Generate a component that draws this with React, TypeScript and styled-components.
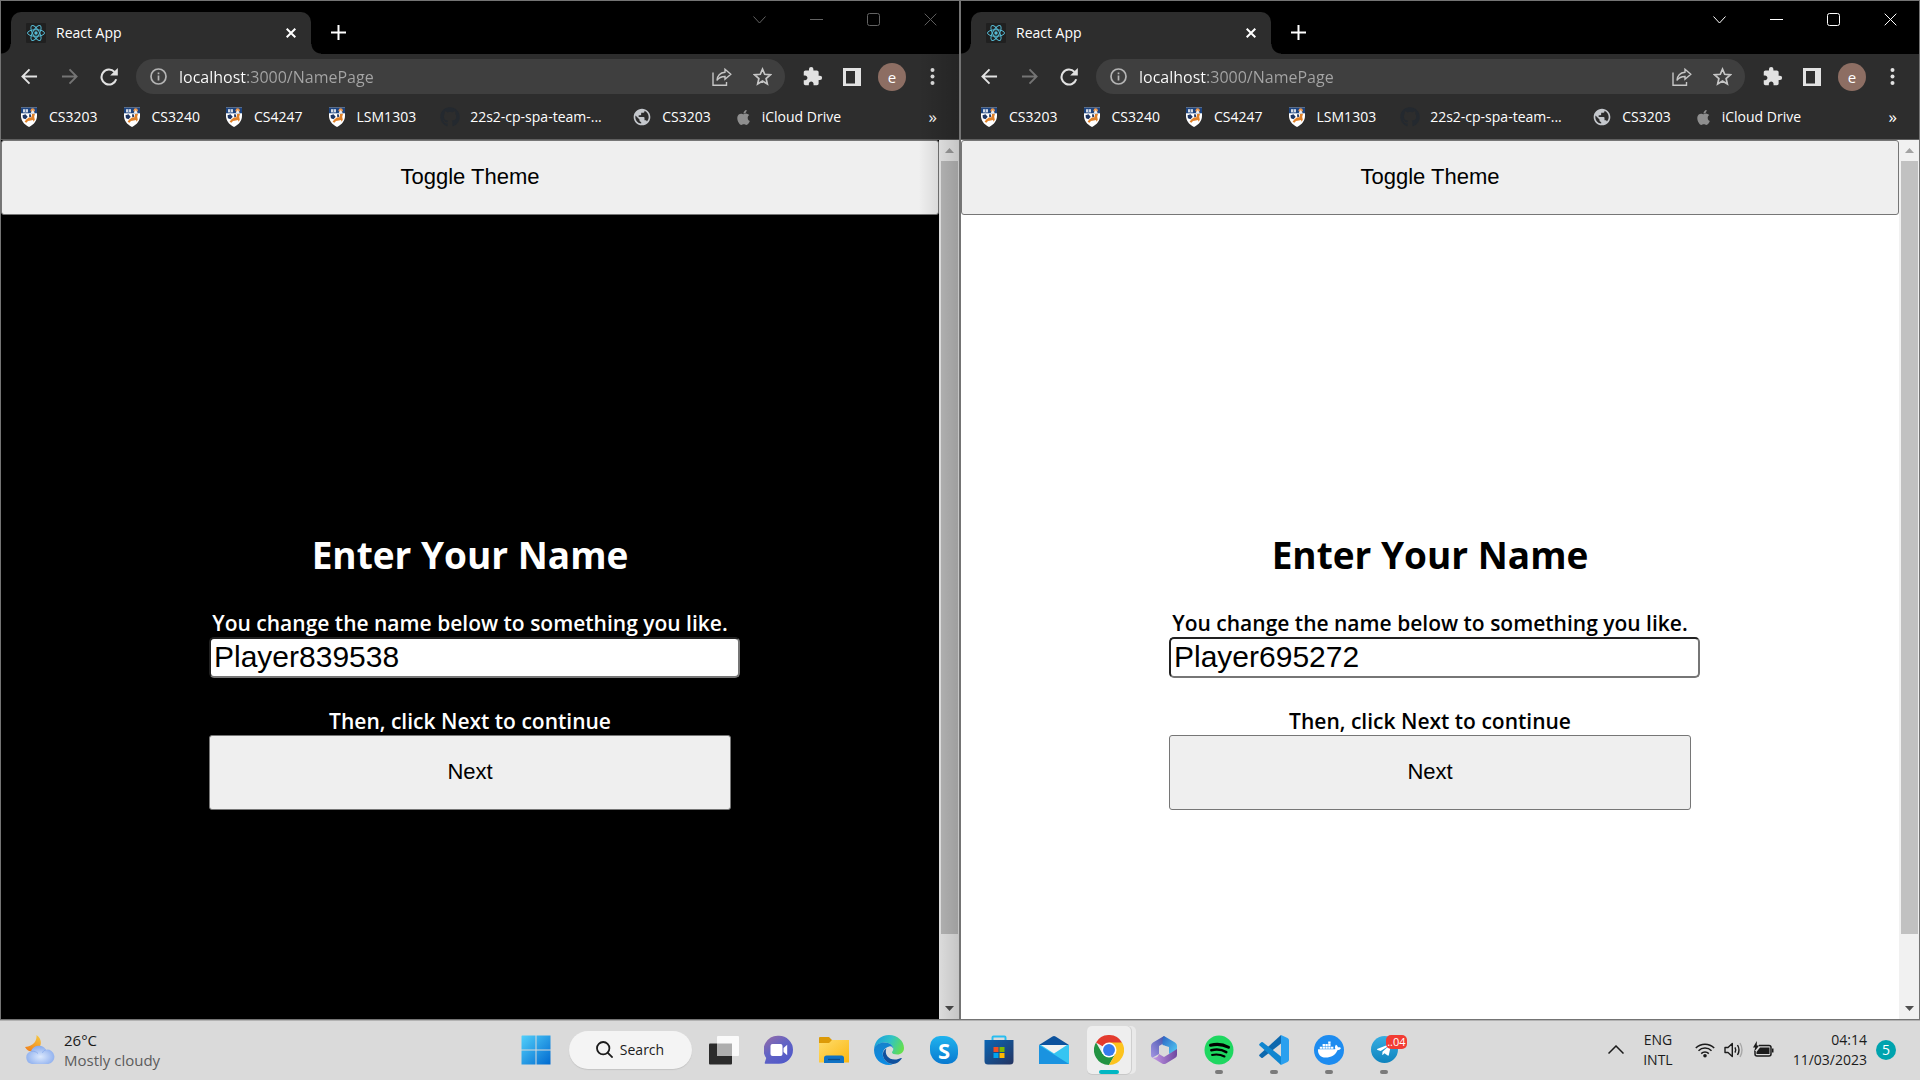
import React, { useId, useState } from "react";
import styled, { createGlobalStyle, css } from "styled-components";
import { FaApple, FaDocker, FaGithub, FaTelegramPlane } from "react-icons/fa";
import { MdExtension, MdPublic } from "react-icons/md";

const UI_FONT = `"Open Sans", "Noto Sans", sans-serif`;
const FORM_FONT = `"Liberation Sans", Arial, sans-serif`;

const GlobalStyle = createGlobalStyle`
  *, *::before, *::after { box-sizing: border-box; }
  body { margin: 0; background: #000; font-family: ${UI_FONT}; }
  button, input { font-family: inherit; margin: 0; }
  svg { display: block; flex: none; }
`;

const Desktop = styled.div`
  display: flex;
  flex-direction: column;
  min-height: 100vh;
`;

const Windows = styled.div`
  display: grid;
  grid-template-columns: 1fr 1fr;
  flex: 1;
`;

/* ---------- browser window ---------- */

const WindowFrame = styled.section<{ $active: boolean }>`
  position: relative;
  display: flex;
  flex-direction: column;
  min-width: 0;
  border: 1px solid #747474;
  background: #2d2d2d;

  ${(p) =>
    !p.$active &&
    css`
      &::after {
        content: "";
        position: absolute;
        inset: 0 0 0 auto;
        width: 40px;
        background: linear-gradient(90deg, transparent, rgba(0, 0, 0, 0.18));
        pointer-events: none;
      }
    `}
`;

const PlainButton = styled.button`
  display: flex;
  align-items: center;
  justify-content: center;
  padding: 0;
  border: 0;
  background: none;
  color: inherit;
`;

const TitleBar = styled.header`
  display: flex;
  height: 53px;
  padding-left: 10px;
  background: #000;
`;

const Tab = styled.div`
  position: relative;
  display: flex;
  align-items: center;
  gap: 10px;
  width: 300px;
  margin-top: 11px;
  padding: 0 12px 0 15px;
  border-radius: 10px 10px 0 0;
  background: #2d2d2d;
  color: #fff;
  font-size: 14px;

  &::before,
  &::after {
    content: "";
    position: absolute;
    bottom: 0;
    width: 10px;
    height: 10px;
  }
  &::before {
    right: 100%;
    background: radial-gradient(circle at 0 0, #000 9px, #2d2d2d 10px);
  }
  &::after {
    left: 100%;
    background: radial-gradient(circle at 100% 0, #000 9px, #2d2d2d 10px);
  }
`;

const TabTitle = styled.span`
  flex: 1;
  line-height: 20px;
`;

const TabButton = styled(PlainButton)`
  width: 16px;
  height: 20px;
  color: #fff;
`;

const NewTab = styled(PlainButton)`
  width: 35px;
  height: 35px;
  margin: 14px 0 0 10px;
  color: #fff;
`;

const WindowControls = styled.div<{ $active: boolean }>`
  display: flex;
  height: 37px;
  margin-left: auto;
  color: ${(p) => (p.$active ? "#fff" : "#636363")};
`;

const ControlButton = styled(PlainButton)`
  width: 57px;
`;

const Toolbar = styled.div`
  display: flex;
  align-items: center;
  height: 45px;
  padding: 0 7px 0 8px;
  color: #e2e2e2;
`;

const ToolButton = styled(PlainButton)<{ $dim?: boolean }>`
  width: 40px;
  height: 35px;
  color: ${(p) => (p.$dim ? "#747474" : "#e2e2e2")};
`;

const AddressBar = styled.div`
  display: flex;
  flex: 1;
  align-items: center;
  min-width: 0;
  height: 35px;
  margin: 0 7px;
  padding: 0 3px 0 14px;
  border-radius: 18px;
  background: #3f3f3f;
  color: #b4b4b4;
`;

const AddressInput = styled.input`
  flex: 1;
  min-width: 0;
  margin-left: 12px;
  padding: 0;
  border: 0;
  outline: 0;
  background: linear-gradient(90deg, #fff 68px, #a5a5a5 68px);
  background-clip: text;
  -webkit-background-clip: text;
  -webkit-text-fill-color: transparent;
  color: #fff;
  font-size: 16px;
  line-height: 24px;
`;

const AddressAction = styled(PlainButton)`
  width: 40px;
  height: 35px;
  color: #c6c6c6;
`;

const Avatar = styled.span`
  display: flex;
  align-items: center;
  justify-content: center;
  width: 28px;
  height: 28px;
  border-radius: 50%;
  background: #8d6e63;
  color: #fff;
  font-size: 15px;
  line-height: 20px;
`;

const BookmarksBar = styled.nav`
  display: flex;
  align-items: center;
  gap: 24px;
  height: 41px;
  padding: 0 22px 4px 18px;
  border-bottom: 1px solid #5f5f5f;
`;

const Bookmark = styled.a`
  display: flex;
  align-items: center;
  gap: 10px;
  color: #fff;
  font-size: 14px;
  line-height: 20px;
  text-decoration: none;
  white-space: nowrap;
`;

const BookmarkTitle = styled.span<{ $long?: boolean }>`
  ${(p) => p.$long && "width: 138px;"}
`;

const MoreBookmarks = styled(PlainButton)`
  margin-left: auto;
  color: #fff;
  font-size: 17px;
  line-height: 20px;
`;

/* ---------- page inside the window ---------- */

const Viewport = styled.div`
  display: flex;
  flex: 1;
`;

const Page = styled.main<{ $dark: boolean }>`
  display: flex;
  flex: 1;
  flex-direction: column;
  background: ${(p) => (p.$dark ? "#000" : "#fff")};
  color: ${(p) => (p.$dark ? "#fff" : "#000")};
`;

const WideButton = styled.button`
  width: 100%;
  height: 75px;
  padding: 0 0 2px;
  border: 1px solid #767676;
  border-radius: 3px;
  background: #efefef;
  color: #000;
  font-family: ${FORM_FONT};
  font-size: 22px;
`;

const NameForm = styled.form`
  display: flex;
  flex: 1;
  flex-direction: column;
  justify-content: center;
  width: 522px;
  margin: 0 auto;
  padding-top: 103px;
  text-align: center;
`;

const Title = styled.h1`
  margin: 0 0 24px;
  font-size: 37px;
  font-weight: 700;
  line-height: 56px;
`;

const Hint = styled.label`
  padding-top: 2px;
  font-size: 21px;
  font-weight: 600;
  line-height: 28px;
  white-space: nowrap;
`;

const NameInput = styled.input`
  width: calc(100% + 9px);
  height: 41px;
  margin-bottom: 27px;
  padding: 0 3px 2px;
  border: 2px inset #767676;
  border-radius: 5px;
  background: #fff;
  color: #000;
  font-family: ${FORM_FONT};
  font-size: 30px;
`;

const Scrollbar = styled.div`
  display: flex;
  flex-direction: column;
  width: 20px;
  padding: 0 1px 0 2px;
  background: #f1f1f1;
`;

const ScrollArrow = styled(PlainButton)<{ $dim?: boolean }>`
  height: 21px;
  color: ${(p) => (p.$dim ? "#a3a3a3" : "#505050")};
`;

const ScrollTrack = styled.div`
  display: grid;
  flex: 1;
  grid-template-rows: 12fr 1fr;
`;

const ScrollThumb = styled.div`
  background: #c1c1c1;
`;

/* ---------- taskbar ---------- */

const Taskbar = styled.footer`
  display: grid;
  grid-template-columns: 1fr auto 1fr;
  height: 60px;
  padding-bottom: 2px;
  border-top: 1px solid #b2b2b2;
  background: #dadada;
  color: #1b1b1b;
  font-size: 14px;
  line-height: 20px;
`;

const Weather = styled(PlainButton)`
  justify-content: flex-start;
  gap: 9px;
  padding-left: 25px;
  font-size: 15px;
  line-height: 20px;
  text-align: left;
`;

const Condition = styled.span`
  display: block;
  color: #5c5c5c;
`;

const Apps = styled.div`
  display: flex;
  align-items: center;
`;

const AppSlot = styled(PlainButton)`
  position: relative;
  width: 55px;
  height: 100%;
`;

const Running = styled.span<{ $focused?: boolean }>`
  position: absolute;
  bottom: 4px;
  left: 50%;
  width: ${(p) => (p.$focused ? 20 : 8)}px;
  height: 4px;
  border-radius: 2px;
  background: ${(p) => (p.$focused ? "#00b7c3" : "#7a7a7a")};
  transform: translateX(-50%);
`;

const FocusedPlate = styled.span`
  display: flex;
  align-items: center;
  justify-content: center;
  width: 44px;
  height: 48px;
  border-radius: 5px;
  background: #eeeeee;
  box-shadow: 1px 0 0 #cfcfcf, 0 1px 0 #c8c8c8, 5px 0 0 #e9e9e9;
`;

const SearchButton = styled(PlainButton)`
  gap: 7px;
  width: 123px;
  height: 38px;
  margin: 0 5px;
  border-radius: 19px;
  background: #f4f4f4;
  box-shadow: 0 1px 1px #c4c4c4;
  font-size: 14px;
  line-height: 20px;
`;

const Disc = styled.span<{ $color: string; $size: number }>`
  display: flex;
  align-items: center;
  justify-content: center;
  width: ${(p) => p.$size}px;
  height: ${(p) => p.$size}px;
  border-radius: 50%;
  background: ${(p) => p.$color};
  color: #fff;
`;

const UnreadBadge = styled.span`
  position: absolute;
  top: 14px;
  right: 5px;
  padding: 0 1px;
  border-radius: 5px;
  background: #f23c34;
  color: #fff;
  font-size: 11px;
  line-height: 14px;
`;

const Tray = styled.div`
  display: flex;
  align-items: center;
  justify-content: flex-end;
  padding-right: 24px;
`;

const TrayButton = styled(PlainButton)`
  font-size: 14px;
  line-height: 20px;
`;

const Language = styled(TrayButton)`
  margin: 0 22px 0 19px;
`;

const Status = styled(TrayButton)`
  gap: 9px;
  margin-right: 19px;
`;

const Clock = styled(TrayButton)`
  margin-right: 9px;
  text-align: right;
`;

const Notifications = styled(TrayButton)`
  width: 20px;
  height: 20px;
  border-radius: 50%;
  background: #00a3ae;
  color: #fff;
`;

/* ---------- icons ---------- */

const ReactFavicon = () => (
  <svg width="20" height="20" viewBox="0 0 20 20">
    <rect width="20" height="20" rx="1" fill="#202020" />
    <g fill="none" stroke="#55b9d3" strokeWidth="1">
      <ellipse cx="10" cy="10" rx="8.5" ry="3.3" />
      <ellipse cx="10" cy="10" rx="8.5" ry="3.3" transform="rotate(60 10 10)" />
      <ellipse cx="10" cy="10" rx="8.5" ry="3.3" transform="rotate(120 10 10)" />
    </g>
    <circle cx="10" cy="10" r="1.7" fill="#55b9d3" />
  </svg>
);

const Cross = ({ size, stroke }: { size: number; stroke: number }) => (
  <svg width={size} height={size} viewBox={`0 0 ${size} ${size}`} stroke="currentColor" strokeWidth={stroke}>
    <path d={`M.7.7L${size - 0.7} ${size - 0.7}M${size - 0.7}.7L.7 ${size - 0.7}`} />
  </svg>
);

const PlusIcon = () => (
  <svg width="15" height="15" viewBox="0 0 15 15" stroke="currentColor" strokeWidth="2">
    <path d="M7.5 0v15M0 7.5h15" />
  </svg>
);

const ArrowIcon = ({ flip }: { flip?: boolean }) => (
  <svg width="17" height="17" viewBox="0 0 18 18" fill="none" stroke="currentColor" strokeWidth="2">
    <path d={flip ? "M1 9h15M9 1.5L16.5 9 9 16.5" : "M17 9H2M9 1.5L1.5 9 9 16.5"} />
  </svg>
);

const ReloadIcon = () => (
  <svg width="18" height="18" viewBox="0 0 18 18">
    <path d="M16.2 11.2A7.5 7.5 0 1 1 14.5 3.9" fill="none" stroke="currentColor" strokeWidth="2.1" />
    <path d="M17.8 0v7.6h-7.6z" fill="currentColor" />
  </svg>
);

const InfoIcon = () => (
  <svg width="17" height="17" viewBox="0 0 17 17" fill="none" stroke="currentColor" strokeWidth="1.7">
    <circle cx="8.5" cy="8.5" r="7.5" />
    <path d="M8.5 7.6v4.8M8.5 4.4v1.8" />
  </svg>
);

const ShareIcon = () => (
  <svg width="20" height="18" viewBox="0 0 20 18" fill="none" stroke="currentColor" strokeWidth="1.4">
    <path d="M1 4.5v12.8h13.5v-3.2" />
    <path d="M13 1.2l5.8 5.1-5.8 5V8.5c-3.7 0-6.3 1.1-8 4C5.3 7.8 8 4.7 13 4.2z" />
  </svg>
);

const StarIcon = () => (
  <svg width="19" height="19" viewBox="0 0 18 18" fill="none" stroke="currentColor" strokeWidth="1.6">
    <path d="M9 2l2.1 4.9 5.3.5-4 3.5 1.2 5.2L9 13.3l-4.6 2.8 1.2-5.2-4-3.5 5.3-.5z" />
  </svg>
);

const SidePanelIcon = () => (
  <svg width="18" height="18" viewBox="0 0 18 18">
    <path d="M0 0h18v18H0zM3 3v12.500h9V3z" fill="currentColor" fillRule="evenodd" />
  </svg>
);

const KebabIcon = () => (
  <svg width="5" height="17" viewBox="0 0 5 17" fill="currentColor">
    <circle cx="2.5" cy="2" r="2" />
    <circle cx="2.5" cy="8.5" r="2" />
    <circle cx="2.5" cy="15" r="2" />
  </svg>
);

const CrestIcon = () => (
  <svg width="20" height="20" viewBox="0 0 20 20">
    <path d="M2 .5h16v8.300c0 5-3 8.700-8 11.200C5 17.500 2 13.800 2 8.800z" fill="#fff" />
    <path d="M2 .5h16v5.800H2z" fill="#1d4480" />
    <path d="M4 2.200h5v3.200H4z" fill="#d5dbe5" />
    <path d="M6.500 2v4" stroke="#6d86ac" />
    <circle cx="13.700" cy="3.300" r="2.100" fill="#ec9a4f" />
    <path d="M11.500 6.200l2.200-3.200 2.200 3.200z" fill="#eee" />
    <path d="M3.500 8.200l3-.9 2.200 2.400-2.200 2.500-2.600-1z" fill="#1d3563" />
    <path d="M10 7.500l1.500-.5.800 2.700-2 .5z" fill="#1d3563" />
    <path d="M13 7l3-.3-.8 3 .6 3-1.200 2-.6-1.700-2.200.6-2.800.3-1.600 1.800-1.800-.9 1.700-2.400 2.700-1.900 2.600-.2z" fill="#e08129" />
  </svg>
);

const Triangle = ({ down }: { down?: boolean }) => (
  <svg width="9" height="5" viewBox="0 0 9 5" fill="currentColor">
    <path d={down ? "M0 0h9L4.5 5z" : "M0 5h9L4.5 0z"} />
  </svg>
);

const CloudMoonIcon = () => (
  <svg width="30" height="30" viewBox="0 0 30 30">
    <defs>
      <linearGradient id="moon" x1="0.7" y1="0" x2="0.2" y2="1">
        <stop offset="0" stopColor="#f6c33c" />
        <stop offset="1" stopColor="#f0801c" />
      </linearGradient>
      <radialGradient id="cloud" cx="0.5" cy="0.6" r="0.6">
        <stop offset="0" stopColor="#dce9fd" />
        <stop offset="1" stopColor="#86a9ec" />
      </radialGradient>
    </defs>
    <path d="M11.500 0c.6 5.500-2.500 11-11.500 12 2.500 5 8 5.500 12 3 4.500-3 6-10.500-.5-15z" fill="url(#moon)" />
    <path d="M7 29a6.500 6.500 0 0 1-1-12.700A8.300 8.300 0 0 1 21 14.700a7.200 7.200 0 0 1 2.300 14.300z" fill="url(#cloud)" />
    <path d="M6 16.500c3-.6 5.500.3 7 2M21 14.800c-1.500.4-3 1.500-3.500 3" fill="none" stroke="#8fb0ee" />
  </svg>
);

const StartIcon = () => (
  <svg width="30" height="30" viewBox="0 0 30 30">
    <defs>
      <linearGradient id="start" x1="0" y1="0" x2="1" y2="1">
        <stop offset="0" stopColor="#52d0fb" />
        <stop offset="1" stopColor="#0069cf" />
      </linearGradient>
    </defs>
    <path d="M1 .5h13.500v14H.5V1zM15.500.5h14v14h-14zM.5 15.500h14v14H.5zM15.500 15.500h14v14h-14z" fill="url(#start)" />
  </svg>
);

const SearchIcon = () => (
  <svg width="17" height="17" viewBox="0 0 17 17" fill="none" stroke="currentColor" strokeWidth="1.8">
    <circle cx="7.2" cy="7.2" r="6.2" />
    <path d="M11.600 11.600l5 5" />
  </svg>
);

const TaskViewIcon = () => (
  <svg width="30" height="30" viewBox="0 0 30 30">
    <rect y="8.500" width="23" height="21" rx="1" fill="#2b2b2b" />
    <rect x="8" y="1" width="22" height="20" rx="1" fill="#fafafa" />
    <rect x="8" y="8.500" width="15" height="12.500" fill="#aeaeae" />
  </svg>
);

const ChatIcon = () => (
  <svg width="30" height="30" viewBox="0 0 30 30">
    <defs>
      <linearGradient id="chat" x1="0" y1="0" x2="0.7" y2="1">
        <stop offset="0" stopColor="#9a6da5" />
        <stop offset="0.5" stopColor="#6263c4" />
        <stop offset="1" stopColor="#5059c9" />
      </linearGradient>
    </defs>
    <path d="M15 .8a14 14 0 1 1 0 28H1.300C.7 28.800.5 28 .8 27.400L2.200 23A14.200 14.200 0 0 1 15 .8z" fill="url(#chat)" />
    <rect x="6.500" y="9" width="12" height="12" rx="2" fill="#fff" />
    <path d="M19.500 13l3.700-3.200v10.500l-3.700-3.300z" fill="#fff" />
  </svg>
);

const FolderIcon = () => (
  <svg width="30" height="30" viewBox="0 0 30 30">
    <defs>
      <linearGradient id="folder" x1="0" y1="0" x2="1" y2="1">
        <stop offset="0" stopColor="#ffdc6b" />
        <stop offset="1" stopColor="#fab711" />
      </linearGradient>
    </defs>
    <path d="M0 3q0-1 1-1h9l3 3h17v7H0z" fill="#dc9a08" />
    <path d="M0 8h10l3-3h17v22.500H0z" fill="url(#folder)" />
    <path d="M5 28v-5q0-2.500 2.500-2.500h15q2.500 0 2.500 2.500v5z" fill="#0f72c4" />
    <path d="M9 24.500h12" stroke="#0b4a87" strokeWidth="1.3" />
  </svg>
);

const EdgeIcon = () => (
  <svg width="30" height="30" viewBox="0 0 30 30">
    <defs>
      <linearGradient id="edgeTop" x1="0" y1="0.3" x2="1" y2="0.6">
        <stop offset="0" stopColor="#1aa0de" />
        <stop offset="0.5" stopColor="#31c3c5" />
        <stop offset="1" stopColor="#66e04b" />
      </linearGradient>
      <linearGradient id="edgeBody" x1="0" y1="0" x2="0" y2="1">
        <stop offset="0" stopColor="#1683cc" />
        <stop offset="1" stopColor="#0b8be4" />
      </linearGradient>
    </defs>
    <path d="M15 0C23.500 0 30 6 30 13c0 4-3 6.500-6.700 6.500-3 0-5.300-.8-5.300-2 0-.9 1.300-1.500 1.300-3.700 0-3.500-3.800-6.300-8.800-6.300C5.500 7.500 1 10.500.1 14 .5 5.500 7 0 15 0z" fill="url(#edgeTop)" />
    <path d="M.1 14C.8 10 5.500 7.500 10.500 7.500c5 0 8.800 2.800 8.800 6.300-1-2-2.500-2.800-4-2.300C10 13 8 17 9 21c1 4.500 5 7.500 10 7.900-1.200.7-2.500 1.100-4 1.100C6 30-.6 23 .1 14z" fill="url(#edgeBody)" />
    <path d="M12.300 13.500c-2 6 2 11 8.500 11 2.500 0 4.500-.7 6.200-1.500.6-.3 1 .3.600.8C25.500 27 22.500 29 19 28.900c-5-.4-9-3.400-10-7.900-.6-2.800.5-5.700 3.300-7.500z" fill="#10519e" />
  </svg>
);

const SkypeShape = styled.span`
  display: flex;
  align-items: center;
  justify-content: center;
  width: 28px;
  height: 28px;
  border-radius: 10px 14px 10px 14px;
  background: linear-gradient(#1fb3ee, #0879d0);
  color: #fff;
  font-size: 22px;
  font-weight: 700;
  line-height: 28px;
`;

const StoreIcon = () => (
  <svg width="30" height="30" viewBox="0 0 30 30">
    <defs>
      <linearGradient id="store" x1="0" y1="0" x2="1" y2="1">
        <stop offset="0" stopColor="#0a66b4" />
        <stop offset="1" stopColor="#253461" />
      </linearGradient>
    </defs>
    <path d="M8.500 6V2.500Q8.500 1.500 9.500 1.500h11q1 0 1 1V6" fill="none" stroke="#28bdf0" strokeWidth="2" />
    <path d="M.5 5h29v21q0 3.500-3.500 3.500H4Q.5 29.500.5 26z" fill="url(#store)" />
    <path d="M9.500 12h5v5h-5z" fill="#f25022" />
    <path d="M15.500 12h5v5h-5z" fill="#7fba00" />
    <path d="M9.500 18h5v5h-5z" fill="#00a4ef" />
    <path d="M15.500 18h5v5h-5z" fill="#ffb900" />
  </svg>
);

const MailIcon = () => (
  <svg width="30" height="30" viewBox="0 0 30 30">
    <path d="M0 10L13.500 1.500q1.500-1 3 0L30 10v5H0z" fill="#0d529d" />
    <path d="M0 10h30v19H0z" fill="#35c5f2" />
    <path d="M0 10l30 19H0z" fill="#1a93e0" />
    <path d="M2 10h26L15 18.500z" fill="#f2f2f2" />
  </svg>
);

const ChromeIcon = () => (
  <svg width="30" height="30" viewBox="0 0 48 48">
    <path d="M24 24L3.200 12A24 24 0 0 1 44.800 12z" fill="#e33b2e" />
    <path d="M3.200 12L13.600 30 34.400 30 24 48A24 24 0 0 1 3.200 12z" fill="#229342" />
    <path d="M34.400 30L24 48A24 24 0 0 0 44.800 12H24z" fill="#fcc31e" />
    <circle cx="24" cy="24" r="12" fill="#fff" />
    <circle cx="24" cy="24" r="9.500" fill="#367bee" />
  </svg>
);

const OfficeIcon = () => (
  <svg width="30" height="30" viewBox="0 0 30 30">
    <defs>
      <linearGradient id="officeA" x1="0" y1="1" x2="1" y2="0">
        <stop offset="0" stopColor="#a596e4" />
        <stop offset="1" stopColor="#3d4fa8" />
      </linearGradient>
      <linearGradient id="officeB" x1="0" y1="0" x2="1" y2="1">
        <stop offset="0" stopColor="#2a63c4" />
        <stop offset="1" stopColor="#55cff5" />
      </linearGradient>
      <linearGradient id="officeC" x1="0" y1="0" x2="1" y2="0">
        <stop offset="0" stopColor="#c79be8" />
        <stop offset="1" stopColor="#6e48a0" />
      </linearGradient>
    </defs>
    <path d="M15 1L4 7.500Q2 8.800 2 11v9.500q0 1.500 1.300 2.300L10 19v-8l7-4z" fill="url(#officeA)" />
    <path d="M15 1q-2 2-1.500 5.500V10l6.500 2v7l8-4v-4q0-2.200-2-3.500z" fill="url(#officeB)" />
    <path d="M28 14v6q0 1.800-2 3l-9 5.500q-2 1-4 0L3 22.500Q8 24 10 19l5 3 5-3z" fill="url(#officeC)" />
    <path d="M15 10.500l4.500 2.500v4.500L15 20l-4.500-2.500V13z" fill="#dadada" />
  </svg>
);

const SpotifyIcon = () => (
  <svg width="30" height="30" viewBox="0 0 30 30">
    <circle cx="15" cy="15" r="14.500" fill="#1ed760" />
    <g fill="none" stroke="#000" strokeLinecap="round">
      <path d="M6.500 10.300c6-1.600 12.500-1 18 2" strokeWidth="3" />
      <path d="M7.300 15.300c5-1.300 10.500-.8 15 1.800" strokeWidth="2.5" />
      <path d="M8 19.900c4.500-1 8.500-.6 12.500 1.600" strokeWidth="2" />
    </g>
  </svg>
);

const CodeIcon = () => (
  <svg width="30" height="30" viewBox="0 0 30 30">
    <path d="M22 0L.6 19.500q-.9.900 0 1.800l1.700 1.500q.7.600 1.500 0L22 8.500z" fill="#0d68ae" />
    <path d="M22 30L.6 10.500q-.9-.9 0-1.800l1.700-1.500q.7-.6 1.500 0L22 21.500z" fill="#0f86d0" />
    <path d="M22 0l6.500 3q1.500.8 1.500 2.300v19.400q0 1.500-1.500 2.300L22 30z" fill="#2aa0ef" />
  </svg>
);

const WifiIcon = () => (
  <svg width="20" height="16" viewBox="0 0 20 16" fill="none" stroke="currentColor" strokeWidth="1.5">
    <path d="M.8 6a13 13 0 0 1 18.400 0M3.500 8.800a9.200 9.200 0 0 1 13 0M6.200 11.600a5.400 5.400 0 0 1 7.600 0" />
    <circle cx="10" cy="13.800" r="1.800" fill="currentColor" stroke="none" />
  </svg>
);

const VolumeIcon = () => (
  <svg width="20" height="16" viewBox="0 0 20 16" fill="none" stroke="currentColor" strokeWidth="1.4">
    <path d="M1 5.500h3L8.300 1.500v13L4 10.500H1z" strokeLinejoin="round" />
    <path d="M11 5.300q1.500 2.700 0 5.400M13.500 3q3 5 0 10" />
    <path d="M16 1q4 7 0 14" stroke="#a8a8a8" />
  </svg>
);

const BatteryIcon = () => (
  <svg width="21" height="17" viewBox="0 0 21 17">
    <path d="M6 4.500h10q2 0 2 2v6.500q0 2-2 2H4q-2 0-2-2V10" fill="none" stroke="currentColor" strokeWidth="1.5" />
    <path d="M7 6.500h9.500v6.500h-13V11zM19 7.500h1.500v4H19z" fill="currentColor" />
    <path d="M3.800 0L0 6.500h2.200L1 11l5.200-6.500H3.800z" fill="currentColor" />
  </svg>
);

/* ---------- composition ---------- */

const bookmarks = [
  { label: "CS3203", icon: <CrestIcon /> },
  { label: "CS3240", icon: <CrestIcon /> },
  { label: "CS4247", icon: <CrestIcon /> },
  { label: "LSM1303", icon: <CrestIcon /> },
  { label: "22s2-cp-spa-team-...", icon: <FaGithub size={20} color="#24292f" />, long: true },
  { label: "CS3203", icon: <MdPublic size={20} color="#c4c7cc" /> },
  { label: "iCloud Drive", icon: <FaApple size={17} color="#8e8e8e" /> },
];

type BrowserProps = { active: boolean; dark: boolean; player: string };

function BrowserWindow({ active, dark, player }: BrowserProps) {
  const [isDark, setDark] = useState(dark);
  const [name, setName] = useState(player);
  const nameId = useId();
  const nextId = useId();

  return (
    <WindowFrame $active={active}>
      <TitleBar>
        <Tab>
          <ReactFavicon />
          <TabTitle>React App</TabTitle>
          <TabButton aria-label="Close tab">
            <Cross size={10} stroke={2} />
          </TabButton>
        </Tab>
        <NewTab aria-label="New tab">
          <PlusIcon />
        </NewTab>
        <WindowControls $active={active}>
          <ControlButton aria-label="Search tabs">
            <svg width="13" height="8" viewBox="0 0 13 8" fill="none" stroke="currentColor">
              <path d="M.5.5l6 6.500 6-6.500" />
            </svg>
          </ControlButton>
          <ControlButton aria-label="Minimise">
            <svg width="13" height="1" viewBox="0 0 13 1" fill="currentColor">
              <path d="M0 0h13v1H0z" />
            </svg>
          </ControlButton>
          <ControlButton aria-label="Maximise">
            <svg width="13" height="13" viewBox="0 0 13 13" fill="none" stroke="currentColor">
              <rect x=".5" y=".5" width="12" height="12" rx="2" />
            </svg>
          </ControlButton>
          <ControlButton aria-label="Close">
            <Cross size={13} stroke={1} />
          </ControlButton>
        </WindowControls>
      </TitleBar>

      <Toolbar>
        <ToolButton aria-label="Back">
          <ArrowIcon />
        </ToolButton>
        <ToolButton aria-label="Forward" $dim>
          <ArrowIcon flip />
        </ToolButton>
        <ToolButton aria-label="Reload">
          <ReloadIcon />
        </ToolButton>
        <AddressBar>
          <InfoIcon />
          <AddressInput aria-label="Address" defaultValue="localhost:3000/NamePage" />
          <AddressAction aria-label="Share">
            <ShareIcon />
          </AddressAction>
          <AddressAction aria-label="Bookmark this page">
            <StarIcon />
          </AddressAction>
        </AddressBar>
        <ToolButton aria-label="Extensions">
          <MdExtension size={21} />
        </ToolButton>
        <ToolButton aria-label="Side panel">
          <SidePanelIcon />
        </ToolButton>
        <ToolButton aria-label="Profile">
          <Avatar>e</Avatar>
        </ToolButton>
        <ToolButton aria-label="Menu">
          <KebabIcon />
        </ToolButton>
      </Toolbar>

      <BookmarksBar>
        {bookmarks.map((b, i) => (
          <Bookmark key={i} href="#">
            {b.icon}
            <BookmarkTitle $long={b.long}>{b.label}</BookmarkTitle>
          </Bookmark>
        ))}
        <MoreBookmarks>»</MoreBookmarks>
      </BookmarksBar>

      <Viewport>
        <Page $dark={isDark}>
          <WideButton type="button" onClick={() => setDark(!isDark)}>
            Toggle Theme
          </WideButton>
          <NameForm onSubmit={(e) => e.preventDefault()}>
            <Title>Enter Your Name</Title>
            <Hint htmlFor={nameId}>You change the name below to something you like.</Hint>
            <NameInput id={nameId} value={name} onChange={(e) => setName(e.target.value)} />
            <Hint htmlFor={nextId}>Then, click Next to continue</Hint>
            <WideButton id={nextId} type="submit">
              Next
            </WideButton>
          </NameForm>
        </Page>
        <Scrollbar>
          <ScrollArrow aria-label="Scroll up" $dim>
            <Triangle />
          </ScrollArrow>
          <ScrollTrack>
            <ScrollThumb />
          </ScrollTrack>
          <ScrollArrow aria-label="Scroll down">
            <Triangle down />
          </ScrollArrow>
        </Scrollbar>
      </Viewport>
    </WindowFrame>
  );
}

const apps = [
  { name: "Task view", icon: <TaskViewIcon /> },
  { name: "Chat", icon: <ChatIcon /> },
  { name: "File Explorer", icon: <FolderIcon /> },
  { name: "Edge", icon: <EdgeIcon /> },
  { name: "Skype", icon: <SkypeShape>S</SkypeShape> },
  { name: "Store", icon: <StoreIcon /> },
  { name: "Mail", icon: <MailIcon /> },
  { name: "Chrome", icon: <ChromeIcon />, focused: true },
  { name: "Microsoft 365", icon: <OfficeIcon /> },
  { name: "Spotify", icon: <SpotifyIcon />, running: true },
  { name: "Code", icon: <CodeIcon />, running: true },
  {
    name: "Docker",
    icon: (
      <Disc $color="#1d8cf0" $size={30}>
        <FaDocker size={23} />
      </Disc>
    ),
    running: true,
  },
  {
    name: "Telegram",
    icon: (
      <Disc $color="linear-gradient(#37aee2, #0f83bd)" $size={27}>
        <FaTelegramPlane size={16} />
      </Disc>
    ),
    running: true,
    unread: "..04",
  },
];

export default function App() {
  return (
    <Desktop>
      <GlobalStyle />
      <Windows>
        <BrowserWindow active={false} dark player="Player839538" />
        <BrowserWindow active dark={false} player="Player695272" />
      </Windows>
      <Taskbar>
        <Weather>
          <CloudMoonIcon />
          <span>
            26°C
            <Condition>Mostly cloudy</Condition>
          </span>
        </Weather>
        <Apps>
          <AppSlot aria-label="Start">
            <StartIcon />
          </AppSlot>
          <SearchButton>
            <SearchIcon />
            Search
          </SearchButton>
          {apps.map((a) => (
            <AppSlot key={a.name} aria-label={a.name}>
              {a.focused ? <FocusedPlate>{a.icon}</FocusedPlate> : a.icon}
              {(a.focused || a.running) && <Running $focused={a.focused} />}
              {a.unread && <UnreadBadge>{a.unread}</UnreadBadge>}
            </AppSlot>
          ))}
        </Apps>
        <Tray>
          <TrayButton aria-label="Show hidden icons">
            <svg width="16" height="9" viewBox="0 0 16 9" fill="none" stroke="currentColor" strokeWidth="1.5">
              <path d="M.5 8.500L8 1l7.500 7.500" />
            </svg>
          </TrayButton>
          <Language>
            ENG
            <br />
            INTL
          </Language>
          <Status aria-label="Network, sound and battery">
            <WifiIcon />
            <VolumeIcon />
            <BatteryIcon />
          </Status>
          <Clock>
            04:14
            <br />
            11/03/2023
          </Clock>
          <Notifications>5</Notifications>
        </Tray>
      </Taskbar>
    </Desktop>
  );
}
